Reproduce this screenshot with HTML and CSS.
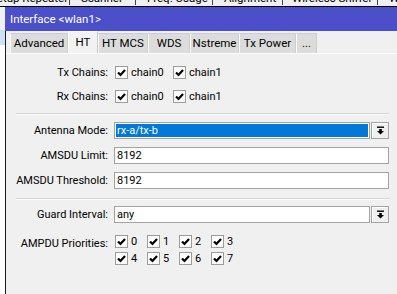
FILE: index.html
```html
<!DOCTYPE html>
<html>
<head>
<meta charset="utf-8">
<link rel="stylesheet" href="styles.css">
</head>
<body>
<div class="bgbar">
  <div class="bgtabs">
    <div class="bgtab t1">Setup Repeater</div>
    <div class="bgtab t2">Scanner</div>
    <div class="bgtab t3">Freq. Usage</div>
    <div class="bgtab t4">Alignment</div>
    <div class="bgtab t5">Wireless Sniffer</div>
    <div class="bgtab t6">WPS</div>
  </div>
</div>
<div class="main">
  <div class="side"><div class="side-top"></div><div class="side-sel"></div></div>
  <div class="dialog">
    <div class="titlebar">Interface &lt;wlan1&gt;</div>
    <div class="body">
      <div class="tabs">
        <div class="tab w-adv">Advanced</div>
        <div class="tab active w-ht">HT</div>
        <div class="tab w-mcs">HT MCS</div>
        <div class="tab w-wds">WDS</div>
        <div class="tab w-ns">Nstreme</div>
        <div class="tab w-tx">Tx Power</div>
        <div class="tab w-more">...</div>
      </div>
      <div class="content">
        <div class="row first">
          <div class="label">Tx Chains:</div>
          <div class="checks chains">
            <div class="check"><span class="box"><svg viewBox="0 0 11 11"><path d="M2 5.5 L4.5 8 L9 3"/></svg></span>chain0</div>
            <div class="check"><span class="box"><svg viewBox="0 0 11 11"><path d="M2 5.5 L4.5 8 L9 3"/></svg></span>chain1</div>
          </div>
        </div>
        <div class="row gap8">
          <div class="label">Rx Chains:</div>
          <div class="checks chains">
            <div class="check"><span class="box"><svg viewBox="0 0 11 11"><path d="M2 5.5 L4.5 8 L9 3"/></svg></span>chain0</div>
            <div class="check"><span class="box"><svg viewBox="0 0 11 11"><path d="M2 5.5 L4.5 8 L9 3"/></svg></span>chain1</div>
          </div>
        </div>
        <div class="sep sep1"></div>
        <div class="row field first-after-sep">
          <div class="label">Antenna Mode:</div>
          <div class="combo">
            <div class="input selected"><span class="sel-text">rx-a/tx-b</span></div>
            <div class="dropbtn"><svg viewBox="0 0 9 9"><rect x="1" y="0.5" width="7" height="1.4"/><path d="M3.2 3 H5.8 V5 H8 L4.5 8.5 L1 5 H3.2 Z"/></svg></div>
          </div>
        </div>
        <div class="row field gap8">
          <div class="label">AMSDU Limit:</div>
          <div class="input wide">8192</div>
        </div>
        <div class="row field gap8">
          <div class="label">AMSDU Threshold:</div>
          <div class="input wide">8192</div>
        </div>
        <div class="sep sep2"></div>
        <div class="row field guard">
          <div class="label">Guard Interval:</div>
          <div class="combo">
            <div class="input">any</div>
            <div class="dropbtn"><svg viewBox="0 0 9 9"><rect x="1" y="0.5" width="7" height="1.4"/><path d="M3.2 3 H5.8 V5 H8 L4.5 8.5 L1 5 H3.2 Z"/></svg></div>
          </div>
        </div>
        <div class="row ampdu">
          <div class="label">AMPDU Priorities:</div>
          <div class="prio">
            <div class="check num"><span class="box"><svg viewBox="0 0 11 11"><path d="M2 5.5 L4.5 8 L9 3"/></svg></span>0</div>
            <div class="check num"><span class="box"><svg viewBox="0 0 11 11"><path d="M2 5.5 L4.5 8 L9 3"/></svg></span>1</div>
            <div class="check num"><span class="box"><svg viewBox="0 0 11 11"><path d="M2 5.5 L4.5 8 L9 3"/></svg></span>2</div>
            <div class="check num"><span class="box"><svg viewBox="0 0 11 11"><path d="M2 5.5 L4.5 8 L9 3"/></svg></span>3</div>
            <div class="check num"><span class="box"><svg viewBox="0 0 11 11"><path d="M2 5.5 L4.5 8 L9 3"/></svg></span>4</div>
            <div class="check num"><span class="box"><svg viewBox="0 0 11 11"><path d="M2 5.5 L4.5 8 L9 3"/></svg></span>5</div>
            <div class="check num"><span class="box"><svg viewBox="0 0 11 11"><path d="M2 5.5 L4.5 8 L9 3"/></svg></span>6</div>
            <div class="check num"><span class="box"><svg viewBox="0 0 11 11"><path d="M2 5.5 L4.5 8 L9 3"/></svg></span>7</div>
          </div>
        </div>
      </div>
    </div>
  </div>
</div>
</body>
</html>
```
FILE: styles.css
```css
* { box-sizing: border-box; }
html, body {
  margin: 0;
  padding: 0;
  width: 397px;
  height: 294px;
  overflow: hidden;
  background: #ffffff;
  font-family: "Roboto", "Liberation Sans", sans-serif;
  font-size: 11px;
  color: #000;
}
.bgbar {
  height: 7px;
  overflow: hidden;
  background: #f0f0f0;
  border-bottom: 1px solid #000;
}
.bgtabs {
  display: flex;
  margin-top: -9px;
  margin-left: -10px;
  height: 14px;
  line-height: 14px;
  font-size: 11.5px;
  white-space: nowrap;
}
.bgtab {
  flex: none;
  overflow: hidden;
  padding-left: 11px;
  border-right: 1px solid #444;
}
.t1 { width: 80px; padding-left: 0; }
.t2 { width: 66px; }
.t3 { width: 77px; }
.t4 { width: 70px; }
.t5 { width: 95px; padding-left: 9px; }
.t6 { width: 40px; border-right: none; }

.main {
  display: flex;
  height: 287px;
}
.side {
  width: 5px;
  flex: none;
}
.side-top { height: 23px; background: #f0f0f0; }
.side-sel { height: 15px; background: #cce1f7; }
.dialog {
  flex: 1;
  display: flex;
  flex-direction: column;
}
.titlebar {
  height: 24px;
  background: #4b4fc9;
  color: #fff;
  font-size: 11.5px;
  line-height: 24px;
  padding-left: 5px;
}
.body {
  flex: 1;
  background: #f0f0f0;
  border-left: 1px solid #1a1a1a;
}
.tabs {
  display: flex;
  align-items: flex-end;
  height: 23px;
  padding-left: 4px;
  border-bottom: 1px solid #ffffff;
}
.tab {
  height: 20px;
  line-height: 19px;
  text-align: center;
  background: #dcdcdc;
  border: 1px solid #cdcdcd;
  border-bottom: none;
  border-left-color: #fafafa;
  font-size: 11.5px;
  white-space: nowrap;
}
.tab.active {
  height: 22px;
  line-height: 21px;
  background: #f2f2f2;
  border-color: #ffffff;
  border-right-color: #c8c8c8;
}
.w-adv { width: 58px; }
.w-ht { width: 30px; }
.w-mcs { width: 50px; }
.w-wds { width: 42px; }
.w-ns { width: 49px; }
.w-tx { width: 57px; }
.w-more { width: 21px; }
.content {
  padding-right: 8px;
}
.row {
  display: grid;
  grid-template-columns: 104px 1fr;
  column-gap: 4px;
  align-items: center;
  height: 16px;
}
.row.first { margin-top: 10px; }
.row.gap8 { margin-top: 8px; }
.row.field { height: 17px; }
.label {
  text-align: right;
  padding-right: 2px;
  white-space: nowrap;
}
.checks { display: flex; }
.check {
  display: flex;
  align-items: center;
  flex: none;
  white-space: nowrap;
}
.chains .check { width: 58px; }
.box {
  width: 13px;
  height: 13px;
  margin-left: 1px;
  margin-right: 3px;
  background: #fff;
  border: 1px solid #9c9c9c;
  display: flex;
  align-items: center;
  justify-content: center;
  flex: none;
}
.box svg { width: 11px; height: 11px; }
.box path { fill: none; stroke: #000; stroke-width: 2.2; }
.sep {
  height: 2px;
  margin-left: 10px;
  border-top: 1px solid #d4d4d4;
  border-bottom: 1px solid #fbfbfb;
}
.sep1 { margin-top: 9px; }
.sep2 { margin-top: 9px; }
.row.first-after-sep { margin-top: 7px; }
.row.guard { margin-top: 6px; }
.combo {
  display: flex;
  gap: 1px;
  height: 17px;
}
.input {
  height: 17px;
  background: #fff;
  border: 1px solid #a3a3a3;
  line-height: 15px;
  padding-left: 2px;
  flex: 1;
  white-space: nowrap;
}
.input.wide { width: 275px; }
.input.selected { padding: 1px; }
.sel-text {
  display: block;
  height: 13px;
  line-height: 13px;
  background: #0078d7;
  color: #fff;
  padding-left: 1px;
}
.dropbtn {
  width: 18px;
  height: 17px;
  flex: none;
  background: #f0f0f0;
  border: 1px solid #a3a3a3;
  box-shadow: inset 1px 1px 0 #fff;
  display: flex;
  align-items: center;
  justify-content: center;
}
.dropbtn svg { width: 9px; height: 9px; fill: #000; }
.row.ampdu {
  height: auto;
  align-items: start;
  margin-top: 12px;
}
.ampdu .label { line-height: 17px; margin-top: 0; }
.prio {
  display: grid;
  grid-template-columns: repeat(4, 32px);
  row-gap: 4px;
}
.check.num { height: 13px; }
```
